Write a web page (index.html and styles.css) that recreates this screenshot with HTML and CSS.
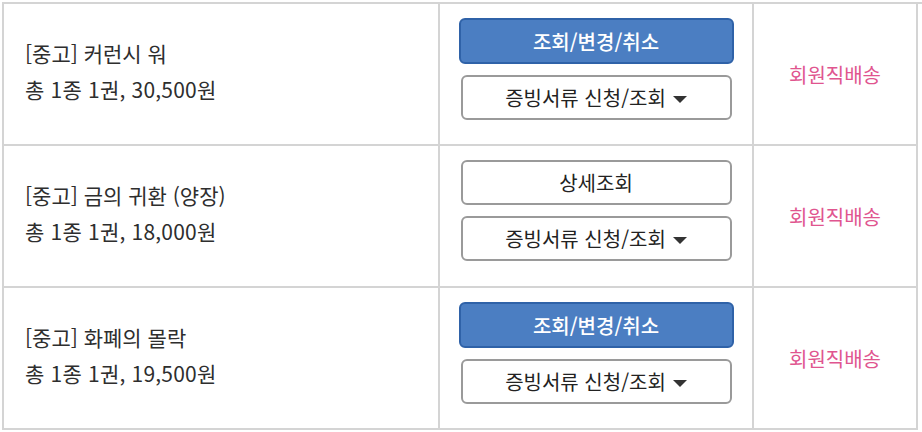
FILE: index.html
```html
<!DOCTYPE html>
<html lang="ko">
<head>
<meta charset="utf-8">
<link rel="stylesheet" href="styles.css">
</head>
<body>
<div class="orders">
  <div class="row">
    <div class="cell info">
      <div class="title">[중고] 커런시 워</div>
      <div class="summary">총 1종 1권, 30,500원</div>
    </div>
    <div class="cell actions">
      <button class="btn btn-primary">조회/변경/취소</button>
      <button class="btn btn-outline">증빙서류 신청/조회 <span class="caret"></span></button>
    </div>
    <div class="cell delivery">회원직배송</div>
  </div>
  <div class="row">
    <div class="cell info">
      <div class="title">[중고] 금의 귀환 (양장)</div>
      <div class="summary">총 1종 1권, 18,000원</div>
    </div>
    <div class="cell actions">
      <button class="btn btn-outline">상세조회</button>
      <button class="btn btn-outline">증빙서류 신청/조회 <span class="caret"></span></button>
    </div>
    <div class="cell delivery">회원직배송</div>
  </div>
  <div class="row">
    <div class="cell info">
      <div class="title">[중고] 화폐의 몰락</div>
      <div class="summary">총 1종 1권, 19,500원</div>
    </div>
    <div class="cell actions">
      <button class="btn btn-primary">조회/변경/취소</button>
      <button class="btn btn-outline">증빙서류 신청/조회 <span class="caret"></span></button>
    </div>
    <div class="cell delivery">회원직배송</div>
  </div>
</div>
</body>
</html>
```

FILE: styles.css
```css
html, body {
  margin: 0;
  padding: 0;
  background: #fff;
  overflow: hidden;
}

body {
  font-family: "Noto Sans CJK KR", "Noto Sans", sans-serif;
  color: #333;
}

.orders {
  margin: 2px 0 0 2px;
  width: 960px;
  border-top: 2px solid #d4d4d4;
  border-left: 2px solid #d4d4d4;
}

.row {
  display: grid;
  grid-template-columns: 436px 314px 164px;
}

.cell {
  height: 140px;
  border-right: 2px solid #d4d4d4;
  border-bottom: 2px solid #d4d4d4;
  box-sizing: content-box;
}

.info {
  display: flex;
  flex-direction: column;
  justify-content: center;
  padding: 0 0 7px 21px;
  height: 133px;
  font-size: 21px;
  line-height: 36px;
  color: #2e2e2e;
}

.summary {
  letter-spacing: 0.2px;
}

.actions {
  display: flex;
  flex-direction: column;
  align-items: center;
  gap: 11px;
  padding-top: 14px;
  height: 126px;
}

.btn {
  height: 46px;
  font-family: inherit;
  font-size: 20px;
  border-radius: 6px;
  padding: 0;
  display: flex;
  align-items: center;
  justify-content: center;
  gap: 7px;
  cursor: pointer;
}

.btn-primary {
  width: 275px;
  background: #4b7ec2;
  border: 2px solid #2f62a8;
  color: #fff;
  font-weight: 500;
}

.btn-outline {
  width: 271px;
  background: #fff;
  border: 2px solid #9a9a9a;
  color: #222;
  height: 45px;
}

.caret {
  width: 0;
  height: 0;
  border-left: 7px solid transparent;
  border-right: 7px solid transparent;
  border-top: 7px solid #333;
  margin-top: 3px;
}

.delivery {
  display: flex;
  align-items: center;
  justify-content: center;
  font-size: 20px;
  color: #e0558f;
}
```
